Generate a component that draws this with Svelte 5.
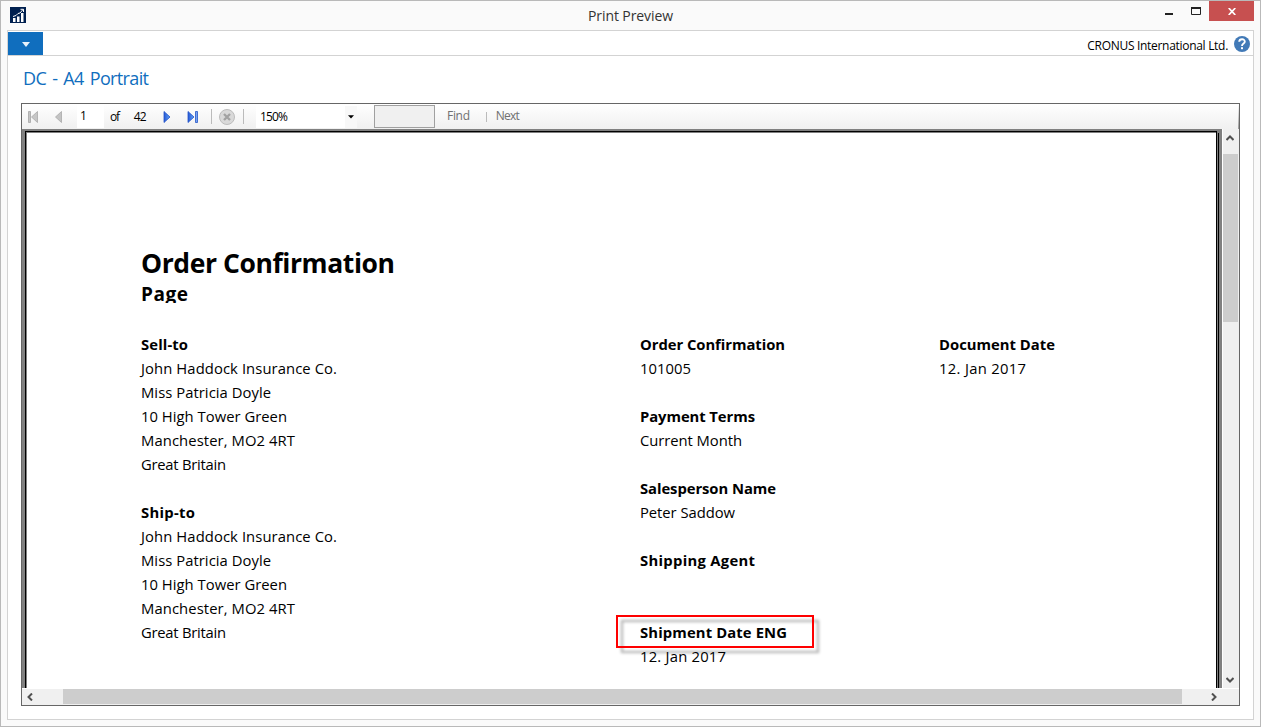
<script lang="ts">
  type Line = { text: string; width: number; bold?: boolean };

  const left: Line[] = [
    { text: 'Sell-to', width: 47, bold: true },
    { text: 'John Haddock Insurance Co.', width: 196 },
    { text: 'Miss Patricia Doyle', width: 130 },
    { text: '10 High Tower Green', width: 146 },
    { text: 'Manchester, MO2 4RT', width: 154 },
    { text: 'Great Britain', width: 85 },
    { text: '', width: 0 },
    { text: 'Ship-to', width: 54, bold: true },
    { text: 'John Haddock Insurance Co.', width: 196 },
    { text: 'Miss Patricia Doyle', width: 130 },
    { text: '10 High Tower Green', width: 146 },
    { text: 'Manchester, MO2 4RT', width: 154 },
    { text: 'Great Britain', width: 85 }
  ];
  const middle: Line[] = [
    { text: 'Order Confirmation', width: 145, bold: true },
    { text: '101005', width: 51 },
    { text: '', width: 0 },
    { text: 'Payment Terms', width: 115, bold: true },
    { text: 'Current Month', width: 102 },
    { text: '', width: 0 },
    { text: 'Salesperson Name', width: 136, bold: true },
    { text: 'Peter Saddow', width: 95 },
    { text: '', width: 0 },
    { text: 'Shipping Agent', width: 115, bold: true },
    { text: '', width: 0 },
    { text: '', width: 0 },
    { text: 'Shipment Date ENG', width: 147, bold: true },
    { text: '12. Jan 2017', width: 86 }
  ];
  const right: Line[] = [
    { text: 'Document Date', width: 116, bold: true },
    { text: '12. Jan 2017', width: 87 }
  ];
  const columns = [left, middle, right];

  // Tracks a line of text out, or in, so that it fills the given width.
  function fit(node: HTMLElement, width: number) {
    const chars = (node.textContent ?? '').length;
    if (chars < 2) return;
    const natural = node.getBoundingClientRect().width;
    node.style.letterSpacing = `${(width - natural) / (chars - 1)}px`;
  }
</script>

<div class="window">
  <header class="titlebar">
    <svg class="logo" width="16" height="16" viewBox="0 0 16 16">
      <rect width="16" height="16" fill="#00204f" />
      <path d="M3 15V11H5.500V15M7 15V9.500H9.500V15M11 15V6H13.500V15" fill="#fff" />
      <path d="M3 9.500L6 8.500L8 6.500L10 6L13 2.500M10.500 2.300H13.500V5" fill="none" stroke="#fff" />
    </svg>
    <h1><span use:fit={85}>Print Preview</span></h1>
    <div class="controls">
      <svg width="44" height="20" viewBox="0 0 44 20"><path d="M4 12H12V14H4Z" fill="#222" /><path d="M30.500 6.500H39.500V13.500H30.500Z" fill="none" stroke="#222" /><path d="M30 7H40" stroke="#222" stroke-width="2" /></svg>
      <button class="close" aria-label="Close">
        <svg width="8" height="7" viewBox="0 0 8 7"><path d="M.7 0L7.300 7M7.300 0L.7 7" stroke="#fff" stroke-width="1.700" /></svg>
      </button>
    </div>
  </header>

  <main class="body">
    <div class="ribbon">
      <button class="menu" aria-label="Menu"><svg width="8" height="5" viewBox="0 0 8 5"><path d="M0 0H8L4 5Z" fill="#e8f2fb" /></svg></button>
      <div class="company">
        <span use:fit={141}>CRONUS International Ltd.</span>
        <svg width="16" height="16" viewBox="0 0 16 16"><circle cx="8" cy="8" r="8" fill="#427ab7" /><path d="M5.200 5.700C5.400 2.300 10.900 2.500 10.800 5.700C10.700 7.600 8 7.400 8 10" fill="none" stroke="#fff" stroke-width="1.900" /><rect x="7" y="11.200" width="2" height="2" fill="#fff" /></svg>
      </div>
    </div>

    <h2><span use:fit={126}>DC - A4 Portrait</span></h2>

    <section class="viewer">
      <div class="toolbar">
        <svg class="first" width="12" height="12" viewBox="0 0 12 12"><path d="M1.500 .5H3.500V11.500H1.500Z" fill="#c4c4c4" stroke="#a5a5a5" stroke-width=".8" /><path d="M10.500 .5V11.500L4.500 6Z" fill="#c6c6c6" stroke="#aaa" stroke-width=".8" /></svg>
        <svg class="prev" width="8" height="12" viewBox="0 0 8 12"><path d="M6.500 .5V11.500L.5 6Z" fill="#c3c3c3" stroke="#aaa" stroke-width=".8" /></svg>
        <div class="page-no">1</div>
        <span class="of" use:fit={10}>of</span>
        <span class="total" use:fit={13}>42</span>
        <svg class="next" width="8" height="12" viewBox="0 0 8 12"><defs><linearGradient id="blue" x2="1"><stop stop-color="#2457d5" /><stop offset="1" stop-color="#66a5f5" /></linearGradient></defs><path d="M1 .5V11.500L7 6Z" fill="url(#blue)" stroke="#2454c8" stroke-width=".8" /></svg>
        <svg class="last" width="12" height="12" viewBox="0 0 12 12"><path d="M1 .5V11.500L7 6Z" fill="url(#blue)" stroke="#2454c8" stroke-width=".8" /><path d="M8.500 .5H10.500V11.500H8.500Z" fill="#76a4f0" stroke="#2454c8" stroke-width=".8" /></svg>
        <i class="sep one"></i>
        <svg class="stop" width="16" height="16" viewBox="0 0 16 16"><circle cx="8" cy="8" r="7.500" fill="#d9d9d9" stroke="#bcbcbc" /><path d="M5 5L11 11M11 5L5 11" stroke="#a2a2a2" stroke-width="2.300" /></svg>
        <i class="sep two"></i>
        <div class="zoom">
          <span use:fit={28}>150%</span>
          <b><svg width="6" height="4" viewBox="0 0 6 4"><path d="M0 .2H6L3 3.500Z" /></svg></b>
        </div>
        <div class="search"></div>
        <span class="find" use:fit={23}>Find</span>
        <i class="sep three"></i>
        <span class="find-next" use:fit={24}>Next</span>
        <i class="edge"></i>
      </div>

      <div class="viewport">
        <div class="desk">
          <article class="paper">
            <h3><span use:fit={254}>Order Confirmation</span></h3>
            <h4><span use:fit={47}>Page</span></h4>
            <div class="columns">
              {#each columns as lines}
                <div class="column">
                  {#each lines as line}
                    <p class:bold={line.bold} class:marked={line.text === 'Shipment Date ENG'}><span use:fit={line.width}>{line.text}</span></p>
                  {/each}
                </div>
              {/each}
            </div>
          </article>
          <div class="shade"></div>
        </div>
        <div class="vscroll">
          <svg width="8" height="6" viewBox="0 0 8 6"><path d="M.5 5L4 1.500L7.500 5" /></svg>
          <div class="thumb"></div>
          <svg width="8" height="6" viewBox="0 0 8 6"><path d="M.5 1L4 4.500L7.500 1" /></svg>
        </div>
      </div>
      <div class="hscroll">
        <svg width="6" height="8" viewBox="0 0 6 8"><path d="M5 .5L1.500 4L5 7.500" /></svg>
        <div class="thumb"></div>
        <svg width="6" height="8" viewBox="0 0 6 8"><path d="M1 .5L4.500 4L1 7.500" /></svg>
      </div>
    </section>
  </main>
</div>

<style>
  :global(body) { margin: 0; overflow: hidden; }
  *, *::after { box-sizing: border-box; }
  h1, h2, h3, h4, p { margin: 0; font-weight: 400; }
  span { white-space: nowrap; }
  svg { display: block; flex: none; }
  button { border: 0; padding: 0; display: flex; align-items: center; justify-content: center; }

  .window {
    width: 1261px; height: 727px; padding: 0 6px 6px; display: flex; flex-direction: column;
    border: 1px solid #b9b9b9; background: #fafafa; color: #000;
    font-family: "Open Sans", "Noto Sans", sans-serif;
  }
  .titlebar { height: 29px; display: grid; grid-template-columns: 120px 1fr 120px; align-items: start; }
  .logo { margin: 6px 0 0 3px; }
  h1 { text-align: center; font-size: 14px; line-height: 29px; color: #333; }
  .controls { display: flex; justify-self: end; }
  .controls > svg { margin-right: 4px; }
  .close { width: 45px; height: 20px; background: #c75050; flex: none; padding-top: 1px; }

  .body { flex: 1; display: flex; flex-direction: column; border: 1px solid #d3d3d3; background: #fff; min-height: 0; }
  .ribbon { height: 25px; display: flex; justify-content: space-between; border-bottom: 1px solid #d3d3d3; flex: none; }
  .menu { width: 35px; height: 23px; margin-top: 1px; background: #106ebe; padding: 1px 0 0 1px; }
  .company { display: flex; align-items: center; gap: 6px; font-size: 12px; line-height: 20px; padding: 1px 3px 0 0; }
  .company span { padding-top: 4px; }
  h2 { height: 47px; padding-left: 15px; font-size: 18px; word-spacing: 2px; line-height: 45px; color: #106ebe; flex: none; }

  .viewer { width: 1219px; height: 603px; margin-left: 13px; display: flex; flex-direction: column; border: 1px solid #666; flex: none; }
  .toolbar { height: 25px; flex: none; display: flex; align-items: center; font-size: 12px; background: linear-gradient(#fff, #f0f0f0); }
  .toolbar > * { flex: none; }
  .first { margin-left: 5px; }
  .prev { margin-left: 16px; }
  .page-no { width: 27px; height: 23px; margin-left: 14px; padding-left: 3px; line-height: 22px; background: #fff; }
  .of { margin-left: 6px; }
  .total { margin-left: 15px; }
  .next { margin-left: 17px; }
  .last { margin-left: 16px; }
  .sep { width: 1px; height: 15px; background: #bbb; }
  .one { margin-left: 12px; }
  .stop { margin-left: 7px; }
  .two { margin-left: 8px; }
  .zoom { width: 101px; height: 23px; margin-left: 12px; padding-left: 4px; display: flex; align-items: center; justify-content: space-between; background: #fff; }
  .zoom b { width: 12px; height: 22px; display: flex; align-items: center; justify-content: center; background: #f8f8f8; }
  .search { width: 61px; height: 23px; margin-left: 17px; border: 1px solid #a0a0a0; background: #f0f0f0; }
  .find { margin: -2px 0 0 12px; color: #707070; }
  .three { height: 10px; margin-left: 16px; }
  .find-next { margin: -2px 0 0 9px; color: #707070; }
  .edge { width: 1px; height: 25px; margin-left: auto; background: linear-gradient(#fff, #999); }

  .viewport { height: 559px; display: flex; flex: none; }
  .desk { width: 1200px; padding: 2px 0 0 3px; display: flex; background: #808080; }
  .paper { width: 1192px; border: 1px solid #000; border-bottom: 0; background: #fff; padding: 111px 0 0 115px; box-shadow: inset 1px 1px #808080; overflow: hidden; }
  .shade { width: 1px; margin: 2px 0 0 1px; background: #000; }
  h3 { height: 41px; font-size: 26.500px; line-height: 41px; font-weight: 700; }
  h4 { height: 19px; font-size: 19px; font-weight: 700; line-height: 20px; overflow: hidden; }
  .columns { display: grid; grid-template-columns: 499px 299px 200px; margin-top: 29px; font-size: 14.800px; line-height: 24px; }
  p { height: 24px; }
  .bold { font-weight: 700; }
  .marked { position: relative; }
  .marked::after {
    content: ""; position: absolute; left: -24px; top: -5px; width: 198px; height: 33px;
    border: 2px solid #fe0000; filter: drop-shadow(5px 5px 1.500px rgba(0, 0, 0, .32));
  }

  .vscroll { width: 17px; display: flex; flex-direction: column; align-items: center; background: #f0f0f0; border-left: 1px solid #fff; padding: 6px 1px 5px 0; }
  .vscroll svg { margin-right: 1px; }
  .vscroll .thumb { width: 15px; height: 168px; background: #cdcdcd; margin: 13px 0 auto; }
  .hscroll { height: 17px; display: flex; align-items: center; background: #f0f0f0; border-top: 1px solid #fff; padding: 0 22px 1px 5px; }
  .hscroll .thumb { width: 1119px; height: 15px; margin: 0 auto 0 30px; background: #cdcdcd; }
  .vscroll path, .hscroll path { fill: none; stroke: #505050; stroke-width: 2; }
</style>
